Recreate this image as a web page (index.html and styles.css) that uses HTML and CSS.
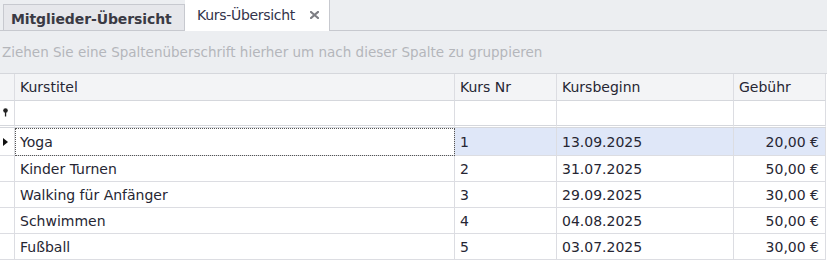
FILE: index.html
```html
<!DOCTYPE html>
<html lang="de">
<head>
<meta charset="utf-8">
<link rel="stylesheet" href="styles.css">
</head>
<body>
<div class="app">
  <div class="tabs">
    <div class="tab inactive">Mitglieder-Übersicht</div>
    <div class="tab active"><span>Kurs-Übersicht</span><svg class="close" width="9" height="8" viewBox="0 0 9 8"><path d="M1 1 L8 7 M8 1 L1 7" stroke="#7d7e84" stroke-width="2.2" stroke-linecap="square"/></svg></div>
    <div class="tab-rest"></div>
  </div>
  <div class="group-panel">Ziehen Sie eine Spaltenüberschrift hierher um nach dieser Spalte zu gruppieren</div>
  <div class="grid">
    <div class="row header">
      <div class="cell ind"></div>
      <div class="cell">Kurstitel</div>
      <div class="cell">Kurs Nr</div>
      <div class="cell">Kursbeginn</div>
      <div class="cell">Gebühr</div>
    </div>
    <div class="row filter">
      <div class="cell ind"><svg width="7" height="9" viewBox="0 0 7 9"><circle cx="3.5" cy="2.5" r="2.3" fill="#222"/><rect x="2.9" y="4" width="1.3" height="4.5" fill="#222"/></svg></div>
      <div class="cell"></div>
      <div class="cell"></div>
      <div class="cell"></div>
      <div class="cell"></div>
    </div>
    <div class="row data selected first">
      <div class="cell ind"><svg width="5" height="8" viewBox="0 0 5 8"><path d="M0 0 L5 4 L0 8 Z" fill="#111"/></svg></div>
      <div class="cell focus">Yoga</div>
      <div class="cell">1</div>
      <div class="cell">13.09.2025</div>
      <div class="cell num">20,00 €</div>
    </div>
    <div class="row data">
      <div class="cell ind"></div>
      <div class="cell">Kinder Turnen</div>
      <div class="cell">2</div>
      <div class="cell">31.07.2025</div>
      <div class="cell num">50,00 €</div>
    </div>
    <div class="row data">
      <div class="cell ind"></div>
      <div class="cell">Walking für Anfänger</div>
      <div class="cell">3</div>
      <div class="cell">29.09.2025</div>
      <div class="cell num">30,00 €</div>
    </div>
    <div class="row data">
      <div class="cell ind"></div>
      <div class="cell">Schwimmen</div>
      <div class="cell">4</div>
      <div class="cell">04.08.2025</div>
      <div class="cell num">50,00 €</div>
    </div>
    <div class="row data">
      <div class="cell ind"></div>
      <div class="cell">Fußball</div>
      <div class="cell">5</div>
      <div class="cell">03.07.2025</div>
      <div class="cell num">30,00 €</div>
    </div>
  </div>
</div>
</body>
</html>
```
FILE: styles.css
```css
html, body {
  margin: 0;
  padding: 0;
  background: #ffffff;
}
.app {
  width: 827px;
  height: 265px;
  font-family: "DejaVu Sans", Tahoma, sans-serif;
  color: #262633;
  background: #eceef1;
  overflow: hidden;
}
.tabs {
  display: flex;
  align-items: flex-end;
  height: 30px;
  border-bottom: 1px solid #c7c9cf;
  background: #eceef1;
}
.tab {
  box-sizing: border-box;
  display: flex;
  align-items: center;
}
.tab.inactive {
  margin-left: 3px;
  width: 182px;
  height: 26px;
  border: 1px solid #c7c9cf;
  border-bottom: none;
  background: #e6e7eb;
  font-weight: bold;
  font-size: 14px;
  padding-left: 7px;
  padding-top: 2px;
  color: #3a3a44;
  letter-spacing: -0.1px;
}
.tab.active {
  width: 145px;
  height: 31px;
  margin-bottom: -1px;
  background: #ffffff;
  border-right: 1px solid #c7c9cf;
  padding-left: 12px;
  padding-right: 10px;
  padding-bottom: 1px;
  font-size: 14px;
  color: #33334a;
  justify-content: space-between;
  letter-spacing: -0.3px;
}
.close {
  display: block;
}
.group-panel {
  height: 42px;
  box-sizing: border-box;
  padding: 13px 0 0 2px;
  font-size: 13.5px;
  color: #b4b6bb;
}
.grid {
  background: #ffffff;
  border-top: 1px solid #d5d7dc;
  height: 193px;
}
.row {
  display: grid;
  grid-template-columns: 15px 440px 102px 177px 92px;
}
.cell {
  box-sizing: border-box;
  border-right: 1px solid #dcdde2;
  border-bottom: 1px solid #dcdde2;
  font-size: 14px;
  display: flex;
  align-items: center;
  padding-left: 5px;
  white-space: nowrap;
  overflow: hidden;
}
.cell.ind {
  padding-left: 0;
  justify-content: center;
  background: #f3f4f6;
}
.header .cell {
  height: 27px;
  background: #f3f4f6;
  border-bottom-color: #d5d7dc;
  padding-bottom: 1px;
}
.filter .cell {
  height: 27px;
  border-bottom: 3px double #d5d7dc;
  background: #ffffff;
}
.filter .cell.ind {
  background: #ffffff;
  justify-content: flex-start;
  padding-left: 2px;
  padding-bottom: 2px;
}
.data .cell {
  height: 26px;
}
.data.first .cell {
  height: 28px;
  padding-top: 1px;
}
.data .cell.ind {
  background: #ffffff;
  justify-content: flex-start;
  padding-left: 3px;
}
.selected .cell {
  background: #dfe7f8;
}
.selected .cell.ind {
  background: #ffffff;
}
.selected .cell.focus {
  background: #ffffff;
  outline: 1px dotted #555;
  outline-offset: -1px;
}
.cell.num {
  justify-content: flex-end;
  padding-right: 6px;
}
```
